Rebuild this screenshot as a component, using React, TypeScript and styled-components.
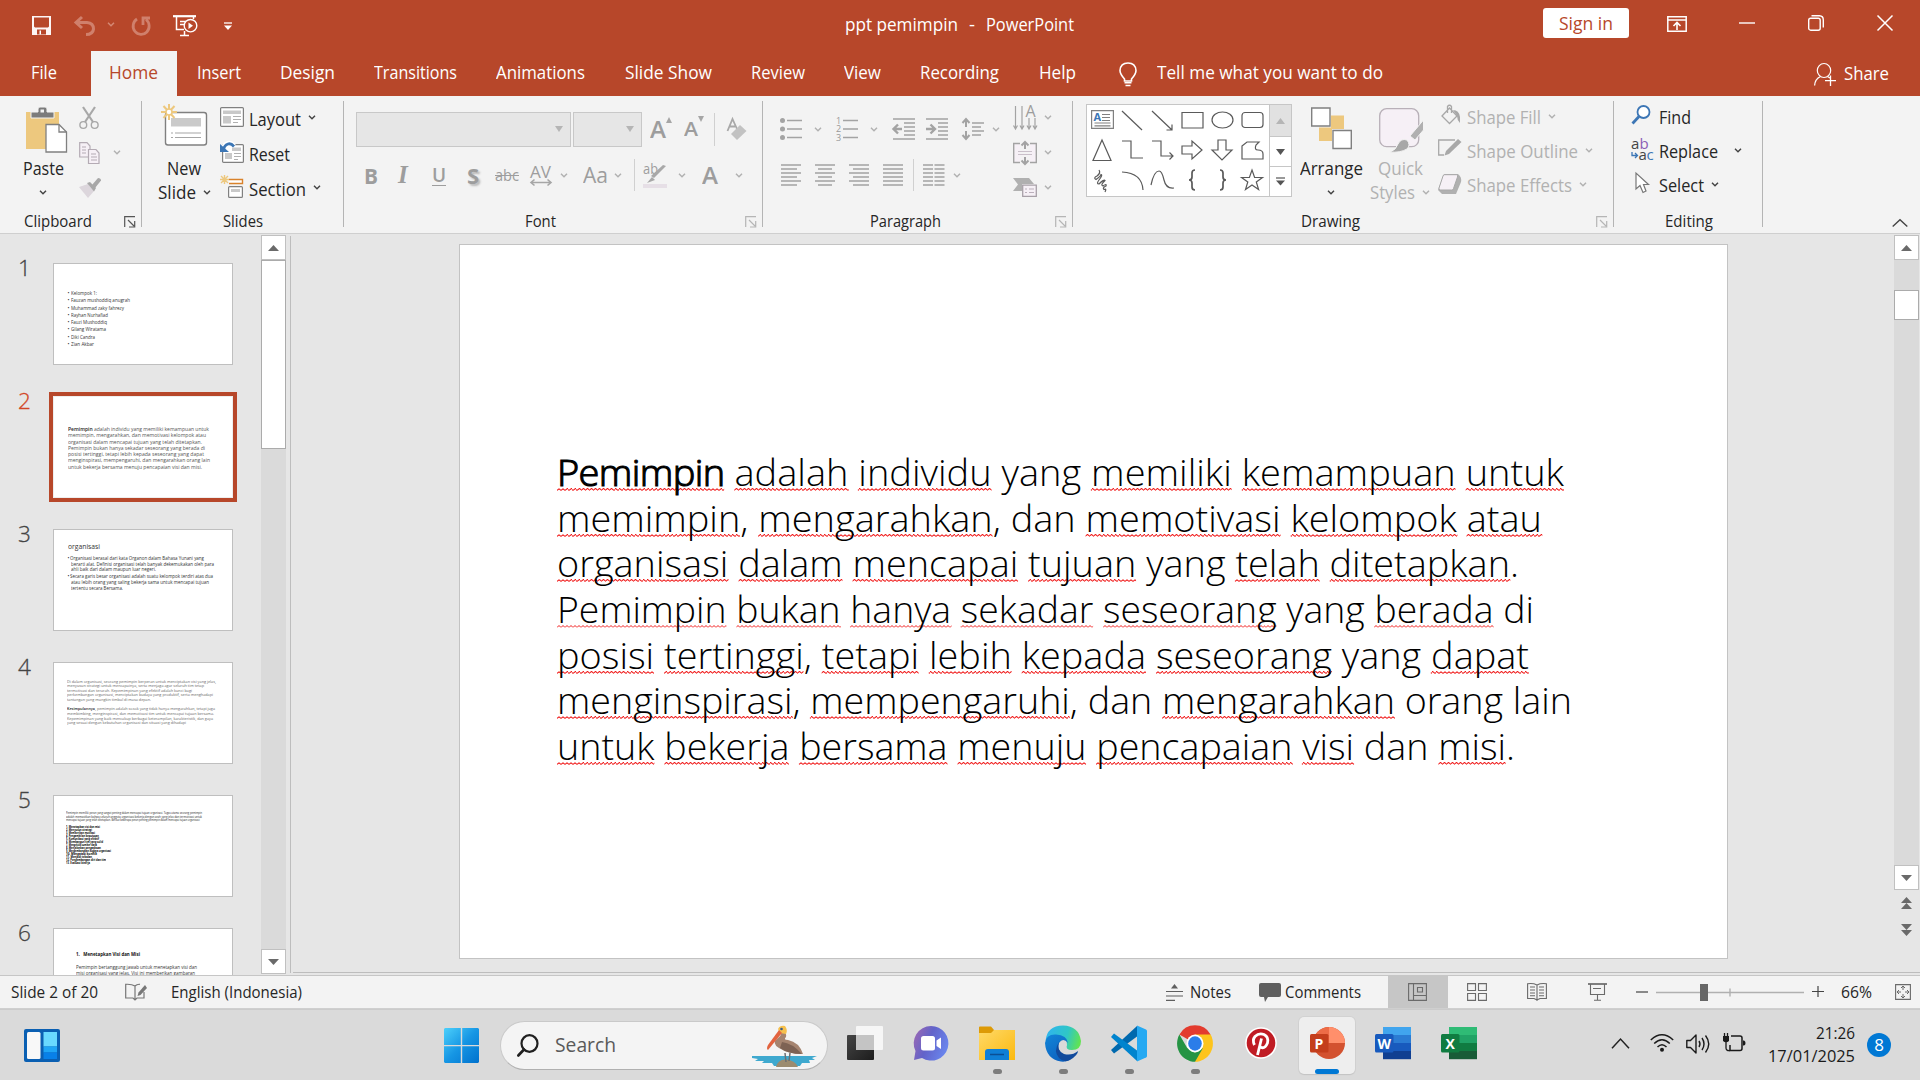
import React, { useLayoutEffect, useRef, useState } from "react";
import styled, { createGlobalStyle } from "styled-components";

const RED = "#b7472a";
const GREY = "#b1b1b1";
const INK = "#262626";

const Global = createGlobalStyle`
  * { box-sizing: border-box; }
  body { margin: 0; overflow: hidden; font-family: "Open Sans", "Noto Sans", sans-serif; color: ${INK}; }
  svg { display: block; flex: none; overflow: visible; }
`;

/* ---------- text condensed to a known measure ---------- */
const FitBox = styled.span<{ $w: number }>`
  display: block;
  flex: none;
  width: ${(p) => p.$w}px;
  white-space: pre;
`;
const FitInner = styled.span`
  display: inline-block;
  transform-origin: 0 50%;
`;

function Fit({ w, children }: { w: number; children: React.ReactNode }) {
  const ref = useRef<HTMLSpanElement>(null);
  const [scale, setScale] = useState(1);
  useLayoutEffect(() => {
    const el = ref.current;
    if (el) setScale(w / (el.getBoundingClientRect().width || w));
  }, []);
  return (
    <FitBox $w={w}>
      <FitInner ref={ref} style={{ transform: `scaleX(${scale})` }}>
        {children}
      </FitInner>
    </FitBox>
  );
}

/* ---------- generic pieces ---------- */
const Screen = styled.div`
  width: 1920px;
  height: 1080px;
  display: flex;
  flex-direction: column;
  background: #e6e6e6;
`;
const Cell = styled.div<{ $w?: number; $x?: number; $up?: number }>`
  width: ${(p) => (p.$w ? p.$w + "px" : "auto")};
  flex: none;
  display: flex;
  align-items: center;
  margin-left: ${(p) => p.$x || 0}px;
  padding-bottom: ${(p) => p.$up || 0}px;
`;
const Ic = ({ w, h, children }: { w: number; h: number; children: React.ReactNode }) => (
  <svg width={w} height={h} viewBox={`0 0 ${w} ${h}`} fill="none">
    {children}
  </svg>
);
const Chev = ({ c = "#444" }: { c?: string }) => (
  <Ic w={8} h={5}>
    <path d="M1 .7L4 3.8L7 .7" stroke={c} strokeWidth="1.4" />
  </Ic>
);

/* ---------- title bar ---------- */
const TitleBar = styled.header`
  height: 51px;
  background: ${RED};
  display: flex;
  color: #fff;
  font-size: 17.5px;
  line-height: 49px;
`;
const DocTitle = styled.div`
  width: 229px;
  display: flex;
  justify-content: space-between;
  flex: none;
`;
const SignIn = styled.div`
  width: 86px;
  height: 30px;
  margin: 8px 0 0 469px;
  padding-left: 16px;
  background: #fff;
  color: ${RED};
  border-radius: 3px;
  line-height: 31px;
  flex: none;
`;
const Tabs = styled.nav`
  height: 45px;
  background: ${RED};
  color: #fff;
  display: flex;
  font-size: 18px;
  line-height: 43px;
`;
const Tab = styled.div<{ $w: number; $pad: number; $active?: boolean }>`
  width: ${(p) => p.$w}px;
  padding-left: ${(p) => p.$pad}px;
  flex: none;
  background: ${(p) => (p.$active ? "#f3f3f3" : "transparent")};
  color: ${(p) => (p.$active ? RED : "#fff")};
`;

const TABS: [string, number, number, number][] = [
  ["File", 91, 31, 26],
  ["Home", 86, 18, 49],
  ["Insert", 80, 20, 44],
  ["Design", 96, 23, 55],
  ["Transitions", 125, 21, 83],
  ["Animations", 128, 18, 89],
  ["Slide Show", 125, 19, 87],
  ["Review", 93, 20, 54],
  ["View", 76, 20, 37],
  ["Recording", 119, 20, 79],
  ["Help", 100, 20, 37],
];

/* ---------- ribbon ---------- */
const Ribbon = styled.section`
  height: 138px;
  background: #f3f3f3;
  border-bottom: 1px solid #cfcfcf;
  display: flex;
  font-size: 17.5px;
`;
const Group = styled.div<{ $w: number }>`
  width: ${(p) => p.$w}px;
  flex: none;
  display: flex;
  flex-direction: column;
  background: linear-gradient(#b4b4b4, #b4b4b4) right 5px / 1px 126px no-repeat;
`;
const GroupBody = styled.div`
  height: 112px;
  display: flex;
`;
const GroupFoot = styled.div`
  height: 25px;
  display: flex;
  align-items: center;
  font-size: 15.8px;
  line-height: 26px;
`;
const FootLabel = styled.div`
  flex: 1;
  display: flex;
  justify-content: center;
`;
const Launcher = styled.div`
  width: 18px;
  margin-top: 2px;
`;
const Stack = styled.div<{ $x: number; $top: number; $row: number; $w?: number; $c?: string }>`
  margin-left: ${(p) => p.$x}px;
  padding-top: ${(p) => p.$top}px;
  width: ${(p) => (p.$w ? p.$w + "px" : "auto")};
  flex: none;
  display: grid;
  grid-auto-rows: ${(p) => p.$row}px;
  align-content: start;
  color: ${(p) => p.$c || INK};
`;
const Strip = styled.div`
  display: flex;
  align-items: center;
`;
const BigButton = styled.div<{ $x: number; $w: number; $c?: string }>`
  margin-left: ${(p) => p.$x}px;
  width: ${(p) => p.$w}px;
  flex: none;
  display: grid;
  grid-template-rows: 60px 24px 24px;
  justify-items: center;
  align-content: start;
  line-height: 24px;
  color: ${(p) => p.$c || INK};
`;
const BigIcon = styled.div<{ $top: number; $left?: number }>`
  padding-top: ${(p) => p.$top}px;
  padding-left: ${(p) => p.$left || 0}px;
`;
const VRule = styled.div<{ $h: number; $x: number; $r: number }>`
  width: 1px;
  height: ${(p) => p.$h}px;
  background: #d0d0d0;
  margin: 0 ${(p) => p.$r}px 0 ${(p) => p.$x}px;
  flex: none;
`;
const Combo = styled.div<{ $w: number }>`
  width: ${(p) => p.$w}px;
  height: 35px;
  border: 1px solid #c8c8c8;
  background: #e6e6e6;
  display: flex;
  align-items: center;
  justify-content: flex-end;
  padding-right: 7px;
  margin-right: 2px;
  flex: none;
`;
const Glyph = styled.span<{ $size?: number; $weight?: number }>`
  color: #9d9d9d;
  font-size: ${(p) => p.$size || 20}px;
  font-weight: ${(p) => p.$weight || 600};
  line-height: 26px;
`;
const ItalicGlyph = styled(Glyph)`
  font-family: "Liberation Serif", serif;
  font-style: italic;
`;
const UnderGlyph = styled(Glyph)`
  border-bottom: 1.5px solid #9d9d9d;
  line-height: 20px;
`;
const ShadowGlyph = styled(Glyph)`
  text-shadow: 2px 2px 2px #bbb;
`;
const StrikeGlyph = styled(Glyph)`
  text-decoration: line-through;
  text-decoration-thickness: 1px;
`;
const Gallery = styled.div`
  width: 184px;
  height: 93px;
  margin: 8px 0 0 13px;
  border: 1px solid #c6c6c6;
  background: #fff;
  display: grid;
  grid-template-columns: repeat(6, 30px);
  grid-auto-rows: 30px;
  place-items: center;
  flex: none;
`;
const GalleryBar = styled.div`
  width: 23px;
  height: 93px;
  margin-top: 8px;
  margin-left: -1px;
  border: 1px solid #c6c6c6;
  background: #fff;
  display: grid;
  grid-template-rows: 31px 30px 30px;
  place-items: center;
  flex: none;
`;
const GalleryStep = styled.div<{ $off?: boolean; $line?: boolean }>`
  width: 100%;
  height: 100%;
  display: grid;
  place-items: center;
  background: ${(p) => (p.$off ? "#e1e1e1" : "#fff")};
  border-top: ${(p) => (p.$line ? "1px solid #c6c6c6" : "0")};
`;
const Collapse = styled.div`
  flex: 1;
  display: flex;
  align-items: flex-end;
  justify-content: flex-end;
  padding: 0 12px 6px 0;
`;

const LaunchIcon = ({ c }: { c: string }) => (
  <Ic w={12} h={12}>
    <path d="M.7 11V.7H11M4 4l6 6M10.7 5v6H5" stroke={c} strokeWidth="1.2" />
  </Ic>
);
const Foot = ({ label, w, launcher }: { label: string; w: number; launcher?: string }) => (
  <GroupFoot>
    <FootLabel>
      <Fit w={w}>{label}</Fit>
    </FootLabel>
    {launcher && (
      <>
        <Cell $w={8} />
        <Launcher>
          <LaunchIcon c={launcher} />
        </Launcher>
      </>
    )}
  </GroupFoot>
);

const lines = (rows: [number, number][], y0: number, step: number) =>
  rows.map(([a, b], i) => `M${a} ${y0 + i * step}H${b}`).join("");

const AlignIcon = ({ rows, w = 20 }: { rows: [number, number][]; w?: number }) => (
  <Ic w={w} h={22}>
    <path d={lines(rows, 1, 4)} stroke="#a3a3a3" strokeWidth="1.3" />
  </Ic>
);

const SHAPES: React.ReactNode[] = [
  <g>
    <path d="M.6 .6H22.4V18.4H.6zM11 4.5h8M11 7.5h8M11 10.5h8M3.5 13h16M3.5 15.8h16" stroke="#808080" />
    <text x="2.500" y="10.800" fontSize="11" fontWeight="700" fill="#3c76b5">A</text>
  </g>,
  <path d="M1 1L21 20" />,
  <path d="M1 1L21 20M21 14.500V20H15.500" />,
  <path d="M1 2.500H22V18H1z" />,
  <ellipse cx="11.500" cy="10" rx="10.500" ry="8" />,
  <rect x="1" y="2.500" width="21" height="15" rx="3" />,
  <path d="M11 0L20 20.500H2z" />,
  <path d="M1 1H10V18H22" />,
  <path d="M1 1H10V16H22M18.500 12.500L22 16L18.500 19.500" />,
  <path d="M1 6H11V1L21 10L11 19V14H1z" />,
  <path d="M7 0H15V10H21L11 20L1 10H7z" />,
  <path d="M1 6L6 2H18L15 5Q13 10 17 10Q22 10 22 14V19H1z" />,
  <path d="M8 0Q10 3 6 6Q2 8 5 9.500Q10 6 10 4.500Q12 5 8 10Q5 14 8 14Q13 9 14 10.500Q9 15 12 16Q16 13 15 16Q11 18 13 19.500Q16 18 14 22" />,
  <path d="M1 2Q21 3 22 20" />,
  <path d="M0 15Q3 1 8 1Q11 1 13 10Q15 19 23 18" />,
  <path d="M14 0Q11 0 11 3V7Q11 10 8 10Q11 10 11 13V17Q11 20 14 20" strokeWidth="1.700" />,
  <path d="M9 0Q12 0 12 3V7Q12 10 15 10Q12 10 12 13V17Q12 20 9 20" strokeWidth="1.700" />,
  <path d="M11 0L13.600 7.500H21.500L15.300 12L17.600 19.500L11 15L4.500 19.500L6.800 12L.6 7.500H8.400z" />,
];

/* ---------- workspace ---------- */
const Work = styled.main`
  height: 741px;
  display: flex;
  overflow: hidden;
`;
const Pane = styled.aside`
  width: 261px;
  flex: none;
  padding-top: 22px;
  overflow: hidden;
`;
const ThumbRow = styled.div`
  height: 133px;
  display: flex;
  align-items: flex-start;
`;
const Num = styled.div<{ $on: boolean }>`
  width: 49px;
  padding-left: 18px;
  margin-top: -3px;
  flex: none;
  font-size: 22.5px;
  font-weight: 300;
  -webkit-text-stroke: 0.3px;
  line-height: 30px;
  color: ${(p) => (p.$on ? "#d24726" : "#444")};
`;
const Frame = styled.div<{ $on: boolean }>`
  padding: 4px;
  margin-top: 3px;
  background: ${(p) => (p.$on ? RED : "transparent")};
`;
const Thumb = styled.div<{ $on: boolean }>`
  width: 180px;
  height: 102px;
  background: #fff;
  border: 1px solid ${(p) => (p.$on ? "#eee" : "#bfbfbf")};
  overflow: hidden;
`;
const MiniLine = styled.div<{ $top: number; $x: number; $s: number; $h: number; $c?: string; $b?: boolean }>`
  display: flex;
  gap: 1px;
  height: ${(p) => p.$h}px;
  line-height: ${(p) => p.$h}px;
  margin-top: ${(p) => p.$top}px;
  margin-left: ${(p) => p.$x}px;
  font-size: ${(p) => p.$s}px;
  color: ${(p) => p.$c || "#333"};
  font-weight: ${(p) => (p.$b ? 700 : 400)};
`;
const MiniStrong = styled.span`
  font-weight: 600;
  color: #222;
`;
const Track = styled.div<{ $h: number }>`
  width: 25px;
  height: ${(p) => p.$h}px;
  margin-top: 1px;
  background: #dadada;
  display: flex;
  flex-direction: column;
  flex: none;
`;
const TrackButton = styled.div`
  height: 25px;
  border: 1px solid #c0c0c0;
  background: #fff;
  display: grid;
  place-items: center;
  flex: none;
`;
const TrackHandle = styled.div<{ $top: number; $h: number }>`
  margin-top: ${(p) => p.$top}px;
  height: ${(p) => p.$h}px;
  border: 1px solid #ababab;
  background: #fff;
`;
const Push = styled.div`
  flex: 1;
`;
const Splitter = styled.div`
  width: 1px;
  height: 737px;
  margin: 2px 2px 0 4px;
  background: #bdbdbd;
  flex: none;
`;
const Stage = styled.div`
  flex: 1;
  display: flex;
  height: 739px;
  border-bottom: 1px solid #bdbdbd;
`;
const Slide = styled.article`
  width: 1269px;
  height: 715px;
  margin: 10px 0 0 166px;
  border: 1px solid #c3c3c3;
  background: #fff;
  padding: 204px 0 0 97px;
  flex: none;
  font-size: 37.5px;
  font-weight: 300;
  line-height: 45.67px;
  color: #000;
`;
const Wavy = styled.span`
  background: url("data:image/svg+xml,%3Csvg xmlns='http://www.w3.org/2000/svg' width='4' height='3'%3E%3Cpath d='M0 2.500L2 .5L4 2.500' fill='none' stroke='%23f01818' stroke-width='1'/%3E%3C/svg%3E")
    repeat-x left 0 bottom 6px;
`;
const StrongWavy = styled(Wavy)`
  -webkit-text-stroke: 1.1px #000;
  letter-spacing: -0.6px;
`;
const SideBar = styled.div`
  width: 25px;
  margin-left: 166px;
  flex: none;
`;
const JumpButton = styled.div`
  height: 27px;
  display: grid;
  place-items: center;
  padding-bottom: 2px;
`;

const SLIDE: [number, string][] = [
  [1007, "*Pemimpin* _adalah_ _individu_ yang _memiliki_ _kemampuan_ _untuk_"],
  [985, "_memimpin_, _mengarahkan_, dan _memotivasi_ _kelompok_ _atau_"],
  [962, "_organisasi_ _dalam_ _mencapai_ _tujuan_ yang _telah_ _ditetapkan_."],
  [977, "_Pemimpin_ _bukan_ _hanya_ _sekadar_ _seseorang_ yang _berada_ di"],
  [972, "_posisi_ _tertinggi_, _tetapi_ _lebih_ _kepada_ _seseorang_ yang _dapat_"],
  [1015, "_menginspirasi_, _mempengaruhi_, dan _mengarahkan_ orang lain"],
  [958, "_untuk_ _bekerja_ _bersama_ _menuju_ _pencapaian_ _visi_ dan _misi_."],
];
const marked = (s: string) =>
  s.split(/(_[^_]+_|\*[^*]+\*)/).map((t, i) =>
    t[0] === "_" ? <Wavy key={i}>{t.slice(1, -1)}</Wavy> : t[0] === "*" ? <StrongWavy key={i}>{t.slice(1, -1)}</StrongWavy> : t
  );
const mini = (s: string) =>
  s.split(/(\*[^*]+\*)/).map((t, i) => (t[0] === "*" ? <MiniStrong key={i}>{t.slice(1, -1)}</MiniStrong> : t));

type Mini = { t: string; w: number; top?: number; x?: number; s?: number; h?: number; dot?: boolean; c?: string; b?: boolean };
const names: [string, number][] = [
  ["Kelompok 1:", 26],
  ["Fauzan mushoddiq anugrah", 59],
  ["Muhammad zaky fahrezy", 53],
  ["Rayhan Nurhafiad", 37],
  ["Fauzi Mushoddiq", 36],
  ["Gilang Wiratama", 35],
  ["Diki Candra", 24],
  ["Zian Akbar", 23],
];
const tasks: [string, number][] = [
  ["1. Menetapkan visi dan misi", 34],
  ["2. Menyusun strategi", 26],
  ["3. Memberikan motivasi", 29],
  ["4. Pengambilan keputusan", 33],
  ["5. Komunikasi yang efektif", 33],
  ["6. Membangun tim yang solid", 37],
  ["7. Mengelola sumber daya", 31],
  ["8. Menjalankan pengawasan", 35],
  ["9. Mengembangkan budaya organisasi", 45],
  ["10. Mengatasi konflik", 31],
  ["11. Menjadi teladan", 26],
  ["12. Pengembangan diri dan tim", 40],
  ["13. Evaluasi kinerja", 24],
];
const THUMBS: Mini[][] = [
  names.map(([t, w], i) => ({ t, w, top: i ? 0 : 26, x: 13.5, s: 5.3, h: 7.3, dot: true })),
  [
    [141, "*Pemimpin* adalah individu yang memiliki kemampuan untuk"],
    [138, "memimpin, mengarahkan, dan memotivasi kelompok atau"],
    [134, "organisasi dalam mencapai tujuan yang telah ditetapkan."],
    [137, "Pemimpin bukan hanya sekadar seseorang yang berada di"],
    [136, "posisi tertinggi, tetapi lebih kepada seseorang yang dapat"],
    [142, "menginspirasi, mempengaruhi, dan mengarahkan orang lain"],
    [134, "untuk bekerja bersama menuju pencapaian visi dan misi."],
  ].map(([w, t], i) => ({ t: t as string, w: w as number, top: i ? 0 : 29, x: 13.5, s: 5.5, h: 6.25, c: "#555" })),
  [
    { t: "organisasi", w: 32, top: 11, x: 13.5, s: 7.4, h: 10 },
    { t: "Organisasi berasal dari kata Organon dalam Bahasa Yunani yang", w: 134, top: 5, x: 13.5, dot: true, h: 5.7, s: 5.1 },
    { t: "berarti alat. Definisi organisasi telah banyak dekemukakan oleh para", w: 143, x: 16.5, h: 5.7, s: 5.1 },
    { t: "ahli baik dari dalam maupun luar negeri.", w: 85, x: 16.5, h: 5.7, s: 5.1 },
    { t: "Secara garis besar organisasi adalah suatu kelompok terdiri atas dua", w: 143, top: 1.4, x: 13.5, dot: true, h: 5.7, s: 5.1 },
    { t: "atau lebih orang yang saling bekerja sama untuk mencapai tujuan", w: 138, x: 16.5, h: 5.7, s: 5.1 },
    { t: "tertentu secara Bersama.", w: 52, x: 16.5, h: 5.7, s: 5.1 },
  ],
  [
    [149, "Di dalam organisasi, seorang pemimpin berperan untuk menciptakan visi yang jelas,"],
    [137, "menyusun strategi untuk mencapainya, serta menjaga agar seluruh tim tetap"],
    [125, "termotivasi dan terarah. Kepemimpinan yang efektif adalah kunci bagi"],
    [146, "perkembangan organisasi, menciptakan budaya yang produktif, serta menghadapi"],
    [84, "tantangan yang mungkin timbul di masa depan."],
    [148, "*Kesimpulannya*, pemimpin adalah sosok yang tidak hanya mengarahkan, tetapi juga"],
    [147, "membimbing, menginspirasi, dan memotivasi tim untuk mencapai tujuan bersama."],
    [146, "Kepemimpinan yang baik mencakup berbagai keterampilan, karakteristik, dan gaya"],
    [119, "yang sesuai dengan kebutuhan organisasi dan situasi yang dihadapi"],
  ].map(([w, t], i) => ({ t: t as string, w: w as number, top: i === 0 ? 16.5 : i === 5 ? 5 : 0, x: 13, s: 4.2, h: 4.6, c: "#666" })),
  [
    ...[
      [136, "Pemimpin memiliki peran yang sangat penting dalam mencapai tujuan organisasi. Tugas utama seorang pemimpin"],
      [136, "adalah memastikan bahwa seluruh anggota organisasi bekerja dengan arah yang jelas dan termotivasi untuk"],
      [134, "mencapai tujuan yang telah ditetapkan. Berikut beberapa peran penting pemimpin dalam mencapai tujuan organisasi:"],
    ].map(([w, t], i) => ({ t: t as string, w: w as number, top: i ? 0 : 16, x: 12, s: 3.2, h: 3.5, c: "#222" })),
    ...tasks.map(([t, w], i) => ({ t, w, top: i ? 0 : 3, x: 12, s: 3.1, h: 3, c: "#000", b: true })),
  ],
  [
    { t: "1.   Menetapkan Visi dan Misi", w: 64, top: 22, x: 22, s: 5.2, h: 7, b: true, c: "#111" },
    { t: "Pemimpin bertanggung jawab untuk menetapkan visi dan", w: 121, top: 5.5, x: 22, s: 5.4, h: 6.2 },
    { t: "misi organisasi yang jelas. Visi ini memberikan gambaran", w: 119, x: 22, s: 5.4, h: 6.2 },
  ],
];

/* ---------- status bar ---------- */
const Status = styled.footer`
  height: 34px;
  background: #f3f3f3;
  border-top: 1px solid #c6c6c6;
  border-bottom: 1px solid #cfcfcf;
  display: flex;
  align-items: stretch;
  font-size: 15.6px;
  line-height: 31px;
`;
const ViewButton = styled.div<{ $on?: boolean }>`
  width: 60px;
  flex: none;
  display: grid;
  place-items: center;
  padding: 0 2px 1px 0;
  background: ${(p) => (p.$on ? "#c6c6c6" : "transparent")};
`;

/* ---------- taskbar ---------- */
const Taskbar = styled.div`
  height: 71px;
  background: #dadada;
  border-top: 1px solid #cbcbcb;
  display: flex;
`;
const Search = styled.div`
  width: 328px;
  height: 49px;
  margin: 11px 0 0 21px;
  border: 1.5px solid #c9c9c9;
  border-bottom-color: #b0b0b0;
  border-radius: 25px;
  background: #f4f4f4;
  display: flex;
  align-items: center;
  padding-left: 16px;
  flex: none;
  font-size: 20px;
  color: #5a5a5a;
`;
const AppTile = styled.div<{ $on?: boolean }>`
  width: 56px;
  height: 57px;
  margin: 7px 5px 0;
  border-radius: 5px;
  flex: none;
  display: grid;
  grid-template-rows: 52px 5px;
  place-items: center;
  background: ${(p) => (p.$on ? "#eeeeee" : "transparent")};
  box-shadow: ${(p) => (p.$on ? "0 1px 1px #c4c4c4, 0 0 0 1px #d2d2d2" : "none")};
`;
const Mark = styled.div<{ $on?: boolean }>`
  width: ${(p) => (p.$on ? 24 : 9)}px;
  height: 5px;
  border-radius: 3px;
  background: ${(p) => (p.$on ? "#0078d4" : "#7d7d7d")};
`;
const Clock = styled.div`
  width: 90px;
  padding: 11px 1px 0 0;
  display: flex;
  flex-direction: column;
  align-items: flex-end;
  font-size: 17px;
  line-height: 23px;
  color: #1a1a1a;
  flex: none;
`;
const Badge = styled.div`
  width: 24px;
  height: 24px;
  border-radius: 50%;
  background: #0078d4;
  color: #fff;
  font-size: 17px;
  line-height: 23px;
  text-align: center;
  margin: 23px 0 0 11px;
  flex: none;
`;

const DocApp = ({ l, dark, tone }: { l: string; dark: string; tone: string[] }) => (
  <Ic w={36} h={34}>
    {tone.map((c, i) => (
      <rect key={c} x="8" y={1 + i * 8} width="28" height="8.200" fill={c} />
    ))}
    <rect x="0" y="8" width="18.500" height="18.500" rx="1.500" fill={dark} />
    <text x="9.200" y="22.500" fontSize="14" fontWeight="700" fill="#fff" textAnchor="middle">{l}</text>
  </Ic>
);

const APPS: { on?: boolean; mark?: boolean; icon: React.ReactNode }[] = [
  {
    icon: (
      <Ic w={36} h={36}>
        <defs>
          <linearGradient id="tv" x1="0" y1="0" x2="1" y2="1"><stop stopColor="#454545" /><stop offset="1" stopColor="#1c1c1c" /></linearGradient>
        </defs>
        <rect x="0" y="10" width="27" height="25" rx="1" fill="url(#tv)" />
        <rect x="9" y="1" width="27" height="24" rx="1" fill="#f6f6f6" />
        <rect x="9" y="10" width="18" height="15" fill="#c4c4c4" />
      </Ic>
    ),
  },
  {
    icon: (
      <Ic w={36} h={36}>
        <defs>
          <linearGradient id="mt" x1="0" y1=".2" x2="1" y2=".6"><stop stopColor="#9a68b4" /><stop offset=".45" stopColor="#6263c9" /><stop offset="1" stopColor="#6a86ee" /></linearGradient>
        </defs>
        <path d="M18 1A17.300 17.300 0 1 1 9 33L1 35L2.500 26A17.300 17.300 0 0 1 18 1z" fill="url(#mt)" />
        <rect x="8" y="11" width="14" height="14.500" rx="2.500" fill="#fff" />
        <path d="M23.500 15.500L28 12.500V24L23.500 21z" fill="#fff" />
      </Ic>
    ),
  },
  {
    mark: true,
    icon: (
      <Ic w={36} h={34}>
        <defs>
          <linearGradient id="fx" x1="0" y1="0" x2="1" y2="1"><stop stopColor="#ffd968" /><stop offset="1" stopColor="#fbb90f" /></linearGradient>
        </defs>
        <path d="M0 7V1.500Q0 .5 1 .5H12L15 4H35V10H0z" fill="#dd9a06" />
        <path d="M0 7H12L15 4H36V34H0z" fill="url(#fx)" />
        <path d="M6 34V26Q6 23 9 23H27Q30 23 30 26V34z" fill="#0f7fd6" />
        <path d="M11 28.500H25" stroke="#0b4f94" strokeWidth="1.500" />
      </Ic>
    ),
  },
  {
    mark: true,
    icon: (
      <Ic w={36} h={37}>
        <defs>
          <linearGradient id="e1" x1="0" y1=".3" x2="1" y2=".5"><stop stopColor="#2fb4ef" /><stop offset=".6" stopColor="#2fc6c6" /><stop offset="1" stopColor="#61e352" /></linearGradient>
          <linearGradient id="e2" x1="0" y1="0" x2=".6" y2="1"><stop stopColor="#1286d8" /><stop offset="1" stopColor="#0c62c0" /></linearGradient>
        </defs>
        <path d="M.5 16Q2 .5 18 .5Q34 1 36 16Q36 25 27 25Q20 25 22 20Q23 12 12 10Q3 10 .5 16z" fill="url(#e1)" />
        <path d="M0 18Q1 9 11 9.500Q22 10 23 18Q18 12 14 18Q11 28 24 35.500Q20 37 16 36.500Q1 34 0 18z" fill="url(#e2)" />
        <path d="M14 17Q11 25 19 29Q27 31 33 26Q33 30 25 35Q19 38 14 33Q8 26 14 17z" fill="#114a9c" />
      </Ic>
    ),
  },
  {
    mark: true,
    icon: (
      <Ic w={36} h={37}>
        <path d="M26 1L0 25L3 28.500L26 11.500z" fill="#0069ae" />
        <path d="M26 36L0 12L3 8.500L26 25.500z" fill="#0084ce" />
        <path d="M26 .5L35 4.500Q36 5 36 6V31Q36 32 35 32.500L26 36.500z" fill="#25a9f2" />
      </Ic>
    ),
  },
  {
    mark: true,
    icon: (
      <Ic w={36} h={37}>
        <path d="M18 18.500L2.400 9.500A18 18.300 0 0 1 33.600 9.500z" fill="#e33b2e" />
        <path d="M18 18.500V9.500H33.600A18 18.300 0 0 1 18 36.800z" fill="#fdc41c" />
        <path d="M2.400 9.500L10.200 23L18 27.500L26 23L18 36.800A18 18.300 0 0 1 2.400 9.500z" fill="#259444" />
        <ellipse cx="18" cy="18.500" rx="8.500" ry="9" fill="#fff" />
        <ellipse cx="18" cy="18.500" rx="6.800" ry="7.200" fill="#2b7de9" />
      </Ic>
    ),
  },
  {
    icon: (
      <Ic w={34} h={34}>
        <circle cx="17" cy="17" r="15.800" fill="#fff" />
        <circle cx="17" cy="17" r="14.300" fill="#c01c24" />
        <path d="M10.500 19Q8 14 11 10.500Q15 6.500 20 8.500Q25 11 23.500 17Q21 23 17 21.500L15.500 19.500M17.500 12.500L13.500 29" stroke="#fff" strokeWidth="2.800" />
      </Ic>
    ),
  },
  {
    on: true,
    icon: (
      <Ic w={36} h={36}>
        <circle cx="20" cy="18" r="16" fill="#d35230" />
        <path d="M20 2A16 16 0 0 0 4 18H20z" fill="#ed6c47" />
        <path d="M20 2A16 16 0 0 1 36 18H20z" fill="#ff8f6b" />
        <rect x="1" y="9" width="18.500" height="18.500" rx="1.500" fill="#c43e1c" />
        <text x="10" y="23.500" fontSize="14" fontWeight="700" fill="#fff" textAnchor="middle">P</text>
      </Ic>
    ),
  },
  { icon: <DocApp l="W" dark="#185abd" tone={["#41a5ee", "#2b7cd3", "#185abd", "#103f91"]} /> },
  { icon: <DocApp l="X" dark="#107c41" tone={["#2fbb75", "#21a366", "#107c41", "#185c37"]} /> },
];

const Tri = ({ up, c = "#6a6a6a", w = 11 }: { up?: boolean; c?: string; w?: number }) => (
  <Ic w={w} h={6}>
    <path d={up ? `M0 6L${w / 2} 0L${w} 6z` : `M0 0H${w}L${w / 2} 6z`} fill={c} />
  </Ic>
);

export default function App() {
  return (
    <Screen>
      <Global />
      <TitleBar>
        <Cell $x={32} $w={41} $up={1}>
          <Ic w={19} h={19}>
            <path d="M0 0H19V19H0z" fill="#fff" fillOpacity=".95" />
            <path d="M2 1.500H17V10.500L16 11.500H3L2 10.500zM5 13.500H14V18.500H5z" fill={RED} />
            <path d="M7.500 14.500H9V18.500H7.500z" fill="#fff" />
          </Ic>
        </Cell>
        <Cell $w={34}>
          <Ic w={22} h={20}>
            <path d="M9 1L3 6.500L9 12M3 6.500H14Q20.500 7 20.500 13Q20 18.500 13 18.500" stroke="#d0806c" strokeWidth="3" />
          </Ic>
        </Cell>
        <Cell $w={24} $up={2}><Chev c="#d58975" /></Cell>
        <Cell $w={42}>
          <Ic w={20} h={20}>
            <path d="M6 3A8 8.300 0 1 0 15 3.500M12 9V2H19" stroke="#d0806c" strokeWidth="2.800" />
          </Ic>
        </Cell>
        <Cell $w={51}>
          <Ic w={25} h={22}>
            <path d="M0 1.200H23" stroke="#fff" strokeWidth="2.200" />
            <path d="M3.500 2V14.500H11M20.500 2V4M7 6.500H13M7 9.500H11M7 20.500H16M11.500 16V20.500" stroke="#fff" strokeWidth="1.500" />
            <ellipse cx="17.500" cy="10.700" rx="6.300" ry="6.200" stroke="#fff" strokeWidth="1.400" fill={RED} />
            <path d="M15.500 7.500V14L20 10.700z" fill="#fff" />
          </Ic>
        </Cell>
        <Cell $w={621}>
          <Ic w={8} h={8}>
            <path d="M0 1H8" stroke="#fff" strokeWidth="1.300" /><path d="M0 3.500H8L4 8z" fill="#fff" />
          </Ic>
        </Cell>
        <DocTitle>
          <Fit w={113}>ppt pemimpin</Fit>
          <Fit w={6}>-</Fit>
          <Fit w={88}>PowerPoint</Fit>
        </DocTitle>
        <SignIn><Fit w={54}>Sign in</Fit></SignIn>
        <Cell $x={38} $w={72} $up={4}>
          <Ic w={20} h={16}>
            <path d="M.8 .8H19.200V15.200H.8zM1 4H19" stroke="#fff" strokeWidth="1.500" />
            <path d="M10 14V7.500M6.500 10L10 6.500L13.500 10" stroke="#fff" strokeWidth="1.600" />
          </Ic>
        </Cell>
        <Cell $w={69} $up={6}><Ic w={16} h={2}><path d="M0 1H16" stroke="#fff" strokeWidth="1.400" /></Ic></Cell>
        <Cell $w={69} $up={5}>
          <Ic w={16} h={16}>
            <rect x=".7" y="3.200" width="11.500" height="12" rx="2" stroke="#fff" strokeWidth="1.400" />
            <path d="M3.500 .8H11.500Q15.300 1 15.300 5V12.500" stroke="#fff" strokeWidth="1.400" />
          </Ic>
        </Cell>
        <Cell $up={5}><Ic w={16} h={16}><path d="M.5 .5L15.500 15.500M15.500 .5L.5 15.500" stroke="#fff" strokeWidth="1.500" /></Ic></Cell>
      </TitleBar>

      <Tabs>
        {TABS.map(([t, w, pad, tw]) => (
          <Tab key={t} $w={w} $pad={pad} $active={t === "Home"}><Fit w={tw}>{t}</Fit></Tab>
        ))}
        <Cell $w={38}>
          <Ic w={18} h={24}>
            <path d="M5.500 19V17Q1 12 1 8.500Q1.500 1 9 1Q16.500 1 17 8.500Q17 12 12.500 17V19z" stroke="#fff" strokeWidth="1.600" />
            <path d="M5.500 20.800H12.500M6.500 23.500H11.500" stroke="#fff" strokeWidth="1.600" />
          </Ic>
        </Cell>
        <Cell $w={657} $up={2}><Fit w={226}>Tell me what you want to do</Fit></Cell>
        <Cell $w={30}>
          <Ic w={22} h={23}>
            <ellipse cx="10" cy="8.500" rx="6.700" ry="7" stroke="#fff" strokeWidth="1.200" />
            <path d="M.6 23.500Q1 17 6.500 14.500M13.500 14.500L16 16M16.500 13.500V24M11 18.700H22" stroke="#fff" strokeWidth="1.300" />
          </Ic>
        </Cell>
        <Cell $up={1}><Fit w={45}>Share</Fit></Cell>
      </Tabs>

      <Ribbon>
        <Group $w={142}>
          <GroupBody>
            <BigButton $x={12} $w={62}>
              <BigIcon $top={11} $left={6}>
                <Ic w={41} h={46}>
                  <path d="M0 5H33V42H0z" fill="#edc87e" />
                  <path d="M5 11V5H12V2Q12 0 14 0H19Q21 0 21 2V5H28V11z" fill="#7c7c7c" stroke="#f3f3f3" />
                  <rect x="14.500" y="2.500" width="3.500" height="3" fill="#f3f3f3" />
                  <path d="M20 17.500H33L40.500 25V45H20z" fill="#fff" stroke="#808080" strokeWidth="1.300" />
                  <path d="M33 17.500V25H40.500" stroke="#808080" strokeWidth="1.300" />
                </Ic>
              </BigIcon>
              <Fit w={41}>Paste</Fit>
              <Cell><Chev /></Cell>
            </BigButton>
            <Stack $x={5} $top={4} $row={35}>
              <Strip>
                <Ic w={20} h={22}>
                  <path d="M4 0L14 15M16 0L6 15" stroke="#a8a8a8" strokeWidth="2.200" />
                  <circle cx="4.300" cy="18" r="3.400" stroke="#a8a8a8" strokeWidth="1.400" /><circle cx="15.700" cy="18" r="3.400" stroke="#a8a8a8" strokeWidth="1.400" />
                </Ic>
              </Strip>
              <Strip>
                <Ic w={21} h={22}>
                  <path d="M.7 .7H8L11 4V15H.7z" fill="#f6f0f6" stroke="#b4abb4" strokeWidth="1.200" />
                  <path d="M9.500 7.500H17L20 11V21.500H9.500z" fill="#f6f0f6" stroke="#b4abb4" strokeWidth="1.200" />
                  <path d="M3 5H7M3 8H7M3 11H7M12 12H17M12 15H18M12 18H18" stroke="#b4abb4" />
                </Ic>
                <Cell $x={13}><Chev c={GREY} /></Cell>
              </Strip>
              <Strip>
                <Ic w={22} h={20}>
                  <path d="M0 9L9 6L15 13L9 20z" fill="#dcd6dc" />
                  <path d="M8 5L11 4L17 10L15 13.500z" fill="#a8a8a8" />
                  <path d="M13 7L19 0Q22 0 22 2.500L16 10z" fill="#a8a8a8" />
                </Ic>
              </Strip>
            </Stack>
          </GroupBody>
          <Foot label="Clipboard" w={68} launcher="#555" />
        </Group>

        <Group $w={202}>
          <GroupBody>
            <BigButton $x={12} $w={60}>
              <BigIcon $top={8}>
                <Ic w={46} h={42}>
                  <rect x="4.500" y="8.500" width="41" height="32.500" rx="2.500" fill="#fff" stroke="#808080" strokeWidth="1.400" />
                  <path d="M10 14H40V22.500H10z" fill="#cacaca" />
                  <path d="M10 29H12M14 29H40M10 33.500H12M14 33.500H40" stroke="#a6a6a6" strokeWidth="1.200" />
                  <path d="M8 0V16M0 8H16M2.500 2L13.500 14M13.500 2L2.500 14" stroke="#edc87e" strokeWidth="2" />
                  <circle cx="8" cy="8" r="3" fill="#fff" stroke="#edc87e" strokeWidth="1.500" />
                </Ic>
              </BigIcon>
              <Fit w={34}>New</Fit>
              <Strip><Fit w={38}>Slide</Fit><Cell $x={7}><Chev /></Cell></Strip>
            </BigButton>
            <Stack $x={6} $top={5} $row={35}>
              <Strip>
                <Cell $w={29} $up={3}>
                  <Ic w={24} h={20}>
                    <rect x=".6" y=".6" width="22.800" height="18.800" rx="1" fill="#fff" stroke="#808080" strokeWidth="1.200" />
                    <path d="M3 3.500H21V7H3zM3 9H11V16.500H3z" fill="#c9c9c9" /><path d="M13 9.500H21M13 12.500H21M13 15.500H18" stroke="#b0b0b0" />
                  </Ic>
                </Cell>
                <Fit w={52}>Layout</Fit><Cell $x={7} $up={2}><Chev /></Cell>
              </Strip>
              <Strip>
                <Cell $w={29} $up={3}>
                  <Ic w={24} h={21}>
                    <rect x="2.600" y="2.600" width="20.800" height="17.800" rx="1" fill="#fff" stroke="#808080" strokeWidth="1.200" />
                    <path d="M12 5.500H21V9H12zM5 11H12V17H5z" fill="#c9c9c9" /><path d="M14 11.500H21M14 14.500H21M14 17.500H18" stroke="#b0b0b0" />
                    <path d="M14 4Q10 0 7 2Q3 4 3 8" stroke="#fff" strokeWidth="5" />
                    <path d="M14 4.500Q11 1 8 2Q4 3.500 3.500 8" stroke="#3c76b5" strokeWidth="2.800" /><path d="M0 2V10H9z" fill="#3c76b5" />
                  </Ic>
                </Cell>
                <Fit w={41}>Reset</Fit>
              </Strip>
              <Strip>
                <Cell $w={29} $up={5}>
                  <Ic w={24} h={23}>
                    <path d="M4.500 0V9M0 4.500H9M1 1L8 8M8 1L1 8" stroke="#edc87e" strokeWidth="1.400" />
                    <path d="M9 4.500H22.500V8.500H9" stroke="#d9822b" strokeWidth="1.400" fill="#fff" />
                    <rect x="8.600" y="11.600" width="13.800" height="10.800" rx="1" fill="#fff" stroke="#808080" strokeWidth="1.200" />
                    <path d="M11 14H20V17H11z" fill="#c9c9c9" />
                  </Ic>
                </Cell>
                <Fit w={57}>Section</Fit><Cell $x={7} $up={2}><Chev /></Cell>
              </Strip>
            </Stack>
          </GroupBody>
          <Foot label="Slides" w={40} />
        </Group>

        <Group $w={419}>
          <GroupBody>
            <Stack $x={12} $top={10} $row={46}>
              <Strip>
                <Combo $w={215}><Tri w={8} c="#b5b5b5" /></Combo>
                <Combo $w={69}><Tri w={8} c="#b5b5b5" /></Combo>
                <Cell $x={6} $w={34}><Glyph $size={23}><Fit w={16}>A</Fit></Glyph><Cell $up={18}><Tri up w={6} c="#a6a6a6" /></Cell></Cell>
                <Cell $w={29}><Glyph $size={20}><Fit w={14}>A</Fit></Glyph><Cell $up={20}><Tri w={6} c="#a6a6a6" /></Cell></Cell>
                <VRule $h={33} $x={1} $r={12} />
                <Ic w={20} h={22}>
                  <path d="M.5 13L5.500 1L10 11M2.500 8.500H8" stroke="#a8a8a8" strokeWidth="1.800" /><path d="M4 16L13 7L19.500 13L10 22z" fill="#c2c2c2" />
                </Ic>
              </Strip>
              <Strip>
                <Cell $x={8} $w={34}><Glyph $size={22} $weight={700}><Fit w={14}>B</Fit></Glyph></Cell>
                <Cell $w={34}><ItalicGlyph $size={25} $weight={700}>I</ItalicGlyph></Cell>
                <Cell $w={35}><UnderGlyph $size={19}>U</UnderGlyph></Cell>
                <Cell $w={28}><ShadowGlyph $size={22} $weight={700}>S</ShadowGlyph></Cell>
                <Cell $w={35}><Fit w={24}><StrikeGlyph $size={16} $weight={400}>abc</StrikeGlyph></Fit></Cell>
                <Cell $w={30}>
                  <Ic w={22} h={21}>
                    <text x="0" y="13" fontSize="16.500" fill="#9d9d9d" textLength="21" lengthAdjust="spacingAndGlyphs">AV</text>
                    <path d="M1 17.500H21M4.500 14.500L1 17.500L4.500 20.500M17.500 14.500L21 17.500L17.500 20.500" stroke="#a6a6a6" strokeWidth="1.600" />
                  </Ic>
                </Cell>
                <Cell $w={23}><Chev c={GREY} /></Cell>
                <Cell $w={31}><Glyph $size={21} $weight={400}><Fit w={25}>Aa</Fit></Glyph></Cell>
                <Cell $w={8}><Chev c={GREY} /></Cell>
                <VRule $h={32} $x={12} $r={8} />
                <Cell $w={35}>
                  <Ic w={25} h={25}>
                    <text x="0" y="11" fontSize="15" fill="#9d9d9d" textLength="15" lengthAdjust="spacingAndGlyphs">ab</text>
                    <path d="M23 3L11 15L8 13L20 2z" fill="#a8a8a8" /><path d="M9 14L12 17L4 20z" fill="#a8a8a8" />
                    <path d="M0 21H24V25H0z" fill="#e6dfe6" />
                  </Ic>
                </Cell>
                <Cell $w={24}><Chev c={GREY} /></Cell>
                <Cell $w={33}><Glyph $size={23}><Fit w={16}>A</Fit></Glyph></Cell>
                <Chev c={GREY} />
              </Strip>
            </Stack>
          </GroupBody>
          <Foot label="Font" w={31} launcher="#b5b5b5" />
        </Group>

        <Group $w={310}>
          <GroupBody>
            <Stack $x={17} $top={10} $row={46} $w={233}>
              <Strip>
                <Cell $w={34}>
                  <Ic w={22} h={22}>
                    <path d="M7 2.500H22M7 11H22M7 19.500H22" stroke="#a3a3a3" strokeWidth="1.300" />
                    <path d="M2.500 2.500h.01M2.500 11h.01M2.500 19.500h.01" stroke="#a3a3a3" strokeWidth="5" strokeLinecap="round" />
                  </Ic>
                </Cell>
                <Cell $w={22}><Chev c={GREY} /></Cell>
                <Cell $w={34}>
                  <Ic w={22} h={22}>
                    <path d="M7 2.500H22M7 11H22M7 19.500H22" stroke="#a3a3a3" strokeWidth="1.300" />
                    <text fontSize="9" fill="#999"><tspan x="0" y="6">1</tspan><tspan x="0" y="14">2</tspan><tspan x="0" y="22.500">3</tspan></text>
                  </Ic>
                </Cell>
                <Cell $w={22}><Chev c={GREY} /></Cell>
                <Cell $w={34}>
                  <Ic w={23} h={22}>
                    <path d="M1 1H23M12 5H23M12 9H23M12 13H23M12 17H23M1 21H23" stroke="#a3a3a3" strokeWidth="1.300" /><path d="M10 11H2M6 6.500L1.500 11L6 15.500" stroke="#a3a3a3" strokeWidth="2.400" />
                  </Ic>
                </Cell>
                <Cell $w={36}>
                  <Ic w={23} h={22}>
                    <path d="M0 1H22M12 5H22M12 9H22M12 13H22M12 17H22M0 21H22" stroke="#a3a3a3" strokeWidth="1.300" /><path d="M0 11H8M4.500 6.500L9 11L4.500 15.500" stroke="#a3a3a3" strokeWidth="2.400" />
                  </Ic>
                </Cell>
                <Cell $w={30}>
                  <Ic w={22} h={22}>
                    <path d="M10 5H22M10 9H19M10 13H22M10 17H19" stroke="#a3a3a3" strokeWidth="1.300" /><path d="M4 1V9M.5 5L4 1L7.500 5M4 13V21M.5 17L4 21L7.500 17" stroke="#a3a3a3" strokeWidth="2" />
                  </Ic>
                </Cell>
                <Chev c={GREY} />
              </Strip>
              <Strip>
                <Cell $x={1} $w={34}><AlignIcon rows={[[0, 20], [0, 16], [0, 20], [0, 16], [0, 20], [0, 16]]} /></Cell>
                <Cell $w={34}><AlignIcon rows={[[0, 20], [3, 17], [0, 20], [3, 17], [0, 20], [3, 17]]} /></Cell>
                <Cell $w={34}><AlignIcon rows={[[0, 20], [4, 20], [0, 20], [4, 20], [0, 20], [4, 20]]} /></Cell>
                <Cell $w={30}><AlignIcon rows={[[0, 20], [0, 20], [0, 20], [0, 20], [0, 20], [0, 20]]} /></Cell>
                <VRule $h={32} $x={0} $r={9} />
                <Cell $w={30}>
                  <Ic w={22} h={22}>
                    <path d={[1, 5, 9, 13, 17, 21].map((y) => `M0 ${y}H10M11.500 ${y}H21.500`).join("")} stroke="#a3a3a3" strokeWidth="1.300" />
                  </Ic>
                </Cell>
                <Chev c={GREY} />
              </Strip>
            </Stack>
            <Stack $x={0} $top={4} $row={35}>
              <Strip>
                <Cell $w={31}>
                  <Ic w={24} h={25}>
                    <path d="M2.500 1V23M9 1V23M16 13V23M22 13V23M.5 20.500L2.500 24L4.500 20.500M7 20.500L9 24L11 20.500M14 20.500L16 24L18 20.500M20 20.500L22 24L24 20.500" stroke="#a3a3a3" strokeWidth="1.200" />
                    <text x="12.500" y="12" fontSize="16" fill="#9d9d9d">A</text>
                  </Ic>
                </Cell>
                <Chev c={GREY} />
              </Strip>
              <Strip>
                <Cell $w={31}>
                  <Ic w={24} h={24}>
                    <path d="M7 2.500H.7V21.500H7M17 2.500H23.300V21.500H17" stroke="#a3a3a3" strokeWidth="1.400" fill="#f6f0f6" /><path d="M5 10.500H19M5 13.500H19" stroke="#c9c0c9" />
                    <path d="M12 8V1.500M8.500 4.500L12 1L15.500 4.500M12 16V22.500M8.500 19.500L12 23L15.500 19.500" stroke="#a3a3a3" strokeWidth="2" />
                  </Ic>
                </Cell>
                <Chev c={GREY} />
              </Strip>
              <Strip>
                <Cell $w={31}>
                  <Ic w={24} h={19}>
                    <path d="M0 0H16L21 6H9V13H0L5 6.500z" fill="#b0b0b0" /><path d="M9.700 7.200H23.300V18.300H9.700z" fill="#f6f0f6" stroke="#a8a0a8" strokeWidth="1.300" />
                    <path d="M12 11H14M16 11H21M12 14.500H14M16 14.500H21" stroke="#bbb0bb" />
                  </Ic>
                </Cell>
                <Chev c={GREY} />
              </Strip>
            </Stack>
          </GroupBody>
          <Foot label="Paragraph" w={71} launcher="#b5b5b5" />
        </Group>

        <Group $w={541}>
          <GroupBody>
            <Gallery>
              {SHAPES.map((s, i) => (
                <svg key={i} width="23" height="20" viewBox="0 0 23 20" fill="none" stroke={i ? "#5a5a5a" : "none"} strokeWidth="1.200">{s}</svg>
              ))}
            </Gallery>
            <GalleryBar>
              <GalleryStep $off><Tri up w={9} c="#b5b5b5" /></GalleryStep>
              <GalleryStep $line><Tri w={9} c="#555" /></GalleryStep>
              <GalleryStep $line>
                <Ic w={9} h={9}><path d="M0 1H9" stroke="#555" strokeWidth="1.200" /><path d="M0 3.500H9L4.500 8.500z" fill="#555" /></Ic>
              </GalleryStep>
            </GalleryBar>
            <BigButton $x={7} $w={64}>
              <BigIcon $top={11}>
                <Ic w={41} h={42}>
                  <path d="M20 8.500H33V22H20zM8 20.500H21V34H8z" fill="#edc87e" />
                  <path d="M.7 1H19V19H.7zM22 23.500H40.300V41.500H22z" fill="#fff" stroke="#808080" strokeWidth="1.400" />
                </Ic>
              </BigIcon>
              <Fit w={63}>Arrange</Fit>
              <Cell><Chev /></Cell>
            </BigButton>
            <BigButton $x={6} $w={62} $c={GREY}>
              <BigIcon $top={12} $left={4}>
                <Ic w={46} h={44}>
                  <rect x=".7" y=".7" width="39" height="38" rx="7" fill="#f6f0f6" stroke="#b8b0b8" strokeWidth="1.300" />
                  <path d="M44.500 12V22L36 32L31 28z" fill="#b0b0b0" stroke="#f3f3f3" />
                  <path d="M11 44Q17 42 19 36Q22 30 28 32Q32 37 28 41Q21 45 11 44z" fill="#a8a8a8" stroke="#f3f3f3" />
                </Ic>
              </BigIcon>
              <Fit w={45}>Quick</Fit>
              <Strip><Fit w={45}>Styles</Fit><Cell $x={7}><Chev c={GREY} /></Cell></Strip>
            </BigButton>
            <Stack $x={7} $top={4} $row={34} $c={GREY}>
              <Strip>
                <Cell $w={29} $up={5}>
                  <Ic w={24} h={20}>
                    <path d="M4 11L11.500 3L19 11L11.500 18.500zM9.500 8V1.500Q11.500 -1 13.500 1.500V8" stroke="#a8a8a8" strokeWidth="1.300" />
                    <path d="M15 5Q21 5 22 12V18Q19 15 19 11z" fill="#a8a8a8" />
                  </Ic>
                </Cell>
                <Fit w={74}>Shape Fill</Fit><Cell $x={7} $up={2}><Chev c={GREY} /></Cell>
              </Strip>
              <Strip>
                <Cell $w={29} $up={8}>
                  <Ic w={24} h={17}>
                    <path d="M17 1H.7V16H6" stroke="#a8a8a8" strokeWidth="1.300" /><path d="M20 0L23.500 3L11 15L6.500 16.500L8 12z" fill="#a8a8a8" />
                  </Ic>
                </Cell>
                <Fit w={111}>Shape Outline</Fit><Cell $x={7} $up={1}><Chev c={GREY} /></Cell>
              </Strip>
              <Strip>
                <Cell $w={29} $up={3}>
                  <Ic w={24} h={20}>
                    <path d="M6 0H20Q24 3 23 8L18 20H4L0 16z" fill="#b0b0b0" /><path d="M6.500 .7H18.500Q20 1 19.500 3L15.500 14.500Q15 16 13.500 16H2Q.5 15.500 1 14L5 2Q5.500 .7 6.500 .7z" fill="#f6f0f6" stroke="#a8a8a8" />
                  </Ic>
                </Cell>
                <Fit w={105}>Shape Effects</Fit><Cell $x={7} $up={2}><Chev c={GREY} /></Cell>
              </Strip>
            </Stack>
          </GroupBody>
          <Foot label="Drawing" w={59} launcher="#b5b5b5" />
        </Group>

        <Group $w={149}>
          <GroupBody>
            <Stack $x={17} $top={4} $row={34}>
              <Strip>
                <Cell $w={28} $up={4}>
                  <Ic w={20} h={20}>
                    <ellipse cx="12.500" cy="7" rx="6" ry="6" stroke="#3c76b5" strokeWidth="1.800" fill="#fff" /><path d="M8 11.500L1.500 18.500" stroke="#3c76b5" strokeWidth="2.800" />
                  </Ic>
                </Cell>
                <Fit w={32}>Find</Fit>
              </Strip>
              <Strip>
                <Cell $w={28} $up={2}>
                  <Ic w={23} h={22}>
                    <text fontSize="15"><tspan x="0" y="10" fill="#444">a</tspan><tspan x="8.500" y="10" fill="#8b5fb5">b</tspan><tspan x="7.500" y="21" fill="#444">a</tspan><tspan x="15.500" y="21" fill="#3c76b5">c</tspan></text>
                    <path d="M1 13V16.500H6M4 14L6.500 16.500L4 19" stroke="#3c76b5" strokeWidth="1.300" />
                  </Ic>
                </Cell>
                <Fit w={59}>Replace</Fit><Cell $x={16} $up={1}><Chev /></Cell>
              </Strip>
              <Strip>
                <Cell $x={4} $w={24} $up={4}>
                  <Ic w={14} h={22}><path d="M1 1V17L5 13.500L8 20.500L11 19L8.500 12.500H13.500z" fill="#fff" stroke="#777" strokeWidth="1.200" /></Ic>
                </Cell>
                <Fit w={45}>Select</Fit><Cell $x={7} $up={2}><Chev /></Cell>
              </Strip>
            </Stack>
          </GroupBody>
          <Foot label="Editing" w={48} />
        </Group>
        <Collapse><Ic w={16} h={8}><path d="M.7 7.500L8 .8L15.300 7.500" stroke="#444" strokeWidth="1.400" /></Ic></Collapse>
      </Ribbon>

      <Work>
        <Pane>
          {THUMBS.map((rows, i) => (
            <ThumbRow key={i}>
              <Num $on={i === 1}>{i + 1}</Num>
              <Frame $on={i === 1}>
                <Thumb $on={i === 1}>
                  {rows.map((r, k) => (
                    <MiniLine key={k} $top={r.top || 0} $x={r.x || 0} $s={r.s || 5} $h={r.h || 6} $c={r.c} $b={r.b}>
                      {r.dot && <span>•</span>}
                      <Fit w={r.w}>{mini(r.t)}</Fit>
                    </MiniLine>
                  ))}
                </Thumb>
              </Frame>
            </ThumbRow>
          ))}
        </Pane>
        <Track $h={739}>
          <TrackButton><Tri up /></TrackButton>
          <TrackHandle $top={0} $h={189} />
          <Push />
          <TrackButton><Tri /></TrackButton>
        </Track>
        <Splitter />
        <Stage>
          <Slide>
            {SLIDE.map(([w, t]) => (
              <Fit key={t} w={w}>{marked(t)}</Fit>
            ))}
          </Slide>
          <SideBar>
            <Track $h={655}>
              <TrackButton><Tri up /></TrackButton>
              <TrackHandle $top={30} $h={30} />
              <Push />
              <TrackButton><Tri /></TrackButton>
            </Track>
            <JumpButton><Ic w={11} h={12}><path d="M0 6L5.500 0L11 6zM0 12L5.500 6L11 12z" fill="#6a6a6a" /></Ic></JumpButton>
            <JumpButton><Ic w={11} h={12}><path d="M0 0H11L5.500 6zM0 6H11L5.500 12z" fill="#6a6a6a" /></Ic></JumpButton>
          </SideBar>
        </Stage>
      </Work>

      <Status>
        <Cell $x={11} $w={114}><Fit w={87}>Slide 2 of 20</Fit></Cell>
        <Cell $w={46}>
          <Ic w={22} h={18}>
            <path d="M10 3Q7 1 .7 1.300V15H8L10 17L12 15H19V9M10 3V16M10 3Q12 1 15 1.300" stroke="#777" strokeWidth="1.200" />
            <path d="M20 2L22 5L15.500 12L12.500 13L13.500 9.500z" fill="#777" />
          </Ic>
        </Cell>
        <Cell $w={995}><Fit w={131}>English (Indonesia)</Fit></Cell>
        <Cell $w={24}>
          <Ic w={17} h={17}><path d="M5 4.500L8.500 0L12 4.500z" fill="#5f5f5f" /><path d="M0 7.500H17M0 12H17M0 16.300H9" stroke="#5f5f5f" strokeWidth="1.200" /></Ic>
        </Cell>
        <Cell $w={69}><Fit w={41}>Notes</Fit></Cell>
        <Cell $w={26}>
          <Ic w={22} h={19}><path d="M2 0H20Q22 0 22 2V12Q22 14 20 14H9L6 19L5 14H2Q0 14 0 12V2Q0 0 2 0z" fill="#5f5f5f" /></Ic>
        </Cell>
        <Cell $w={103}><Fit w={76}>Comments</Fit></Cell>
        <ViewButton $on>
          <Ic w={19} h={18}><path d="M.6 .6H18.400V17.400H.6zM5.500 .6V17.400M5.500 12.500H18.400M9.500 4.500H14.500V9H9.500z" stroke="#6a6a6a" strokeWidth="1.100" /></Ic>
        </ViewButton>
        <ViewButton>
          <Ic w={20} h={18}><path d="M.6 .6H8.500V7.500H.6zM11.500 .6H19.400V7.500H11.500zM.6 10.500H8.500V17.400H.6zM11.500 10.500H19.400V17.400H11.500z" stroke="#6a6a6a" strokeWidth="1.100" /></Ic>
        </ViewButton>
        <ViewButton>
          <Ic w={20} h={18}><path d="M10 2Q6 0 .6 .8V15.500H7L10 17L13 15.500H19.400V.8Q14 0 10 2zM10 2V18M3 4H8M3 7H8M3 10H8M3 12.800H8M12 4H17M12 7H17M12 10H17M12 12.800H17" stroke="#6a6a6a" strokeWidth="1.100" /></Ic>
        </ViewButton>
        <ViewButton>
          <Ic w={19} h={18}><path d="M0 1H19" stroke="#6a6a6a" strokeWidth="1.700" /><path d="M2.500 1V11.500H16.500V1M9.500 11.500V17M6 17.300H13M5 5.500H13" stroke="#6a6a6a" strokeWidth="1.100" /></Ic>
        </ViewButton>
        <Cell $x={8} $w={20} $up={1}><Ic w={12} h={2}><path d="M0 1H12" stroke="#444" strokeWidth="1.200" /></Ic></Cell>
        <Cell $w={156}>
          <Ic w={148} h={17}><path d="M0 8.500H148" stroke="#b0b0b0" strokeWidth="1.600" /><path d="M74 4.500V12.500" stroke="#b0b0b0" strokeWidth="1.400" /><rect x="44" y="0" width="8" height="17" fill="#666" /></Ic>
        </Cell>
        <Cell $w={29} $up={1}><Ic w={12} h={11}><path d="M0 5.500H12M6 0V11" stroke="#444" strokeWidth="1.200" /></Ic></Cell>
        <Cell $w={54}><Fit w={31}>66%</Fit></Cell>
        <Cell $up={1}>
          <Ic w={16} h={16}><path d="M.6 .6H15.400V15.400H.6z" stroke="#6a6a6a" strokeWidth="1.100" /><path d="M8 2V6M6 4L8 2L10 4M8 14V10M6 12L8 14L10 12M2 8H6M4 6L2 8L4 10M14 8H10M12 6L14 8L12 10" stroke="#6a6a6a" /></Ic>
        </Cell>
      </Status>

      <Taskbar>
        <Cell $x={24} $w={420}>
          <Ic w={36} h={33}>
            <rect width="36" height="33" rx="2" fill="#0a5fb2" />
            <rect x="3" y="3" width="13.500" height="27" rx="1.500" fill="#f8f8f8" />
            <path d="M19.500 3H33V17.500H19.500z" fill="#69d9ff" /><path d="M19.500 17.500H33V23.500H19.500z" fill="#1fa5f5" /><path d="M19.500 23.500H33V30H19.500z" fill="#0880e8" />
          </Ic>
        </Cell>
        <Cell $w={35}>
          <Ic w={35} h={35}>
            <defs><linearGradient id="win" x1="0" y1="0" x2="1" y2="1"><stop stopColor="#4cd0fb" /><stop offset=".5" stopColor="#1696e4" /><stop offset="1" stopColor="#0071cd" /></linearGradient></defs>
            <path d="M1 0H16.800V17H0V1zM18.200 0H34L35 1V17H18.200zM0 18.300H16.800V35H1L0 34zM18.200 18.300H35V34L34 35H18.200z" fill="url(#win)" />
          </Ic>
        </Cell>
        <Search>
          <Cell $w={38}>
            <Ic w={22} h={23}><ellipse cx="12.500" cy="9.500" rx="8" ry="8.300" stroke="#1f1f1f" strokeWidth="2.200" /><path d="M7 15.500L1.300 21.500" stroke="#1f1f1f" strokeWidth="2.600" strokeLinecap="round" /></Ic>
          </Cell>
          <Cell $w={197} $up={2}><Fit w={61}>Search</Fit></Cell>
          <Ic w={66} h={42}>
            <path d="M0 31H65L60 33L63 35H57L58 38H50L48 41H22L20 38H10L12 36H3L6 34L0 33z" fill="#3fa9cf" />
            <path d="M24 42Q26 34 34 34.500Q43 35 46 42z" fill="#9c8c70" />
            <path d="M33 28L34 37M38 28L37 36" stroke="#6a6f73" strokeWidth="1.500" />
            <path d="M31 6Q35 8 34 12Q31 15 36 15Q47 17 51 29Q36 29 27 23Q19 18 26 13Q30 10 29 7z" fill="#a58470" />
            <path d="M30 17Q40 18 50 29Q36 29 28 23z" fill="#7d6254" />
            <path d="M26 4Q28 0 33 1Q36 5 34 9L28 8z" fill="#f6c04d" />
            <path d="M27 5L30 8L16 25Q14 24 16 20z" fill="#e2633f" />
            <circle cx="29.500" cy="4" r="1.300" fill="#3b5c8a" />
          </Ic>
        </Search>
        <Cell $w={4} />
        {APPS.map((a, i) => (
          <AppTile key={i} $on={a.on}>
            {a.icon}
            {(a.on || a.mark) && <Mark $on={a.on} />}
          </AppTile>
        ))}
        <Push />
        <Cell $w={39} $up={3}><Ic w={19} h={11}><path d="M1 10.300L9.500 1L18 10.300" stroke="#222" strokeWidth="1.500" /></Ic></Cell>
        <Cell $w={36} $up={4}>
          <Ic w={24} h={18}>
            <path d="M.8 6Q12 -4.500 23.200 6M4.200 9.500Q12 2 19.800 9.500M7.500 13Q12 8.500 16.500 13" stroke="#1a1a1a" strokeWidth="1.500" /><circle cx="12" cy="15.800" r="2" fill="#1a1a1a" />
          </Ic>
        </Cell>
        <Cell $w={36} $up={3}>
          <Ic w={24} h={20}>
            <path d="M.8 6.500H4.500L10 1V19L4.500 13.500H.8z" stroke="#1a1a1a" strokeWidth="1.400" strokeLinejoin="round" /><path d="M13 7Q15 10 13 13M16 4Q20 10 16 16M19.500 1.500Q26 10 19.500 18.500" stroke="#1a1a1a" strokeWidth="1.400" />
          </Ic>
        </Cell>
        <Cell $w={44} $up={5}>
          <Ic w={24} h={19}>
            <path d="M1 3H7V8Q4 10.500 1 8z" fill="#1a1a1a" />
            <path d="M2.500 0V4M5.500 0V4M4 9V15Q4 18 8 17.500" stroke="#1a1a1a" strokeWidth="1.300" />
            <path d="M9 3H18Q20 3 20 5V15.500Q20 17.500 18 17.500H8V12" stroke="#1a1a1a" strokeWidth="1.500" /><path d="M21 7.500H22Q23.500 8 23.500 10T22 12.500H21z" fill="#1a1a1a" />
          </Ic>
        </Cell>
        <Clock><Fit w={39}>21:26</Fit><Fit w={87}>17/01/2025</Fit></Clock>
        <Badge>8</Badge>
        <Cell $w={29} />
      </Taskbar>
    </Screen>
  );
}
